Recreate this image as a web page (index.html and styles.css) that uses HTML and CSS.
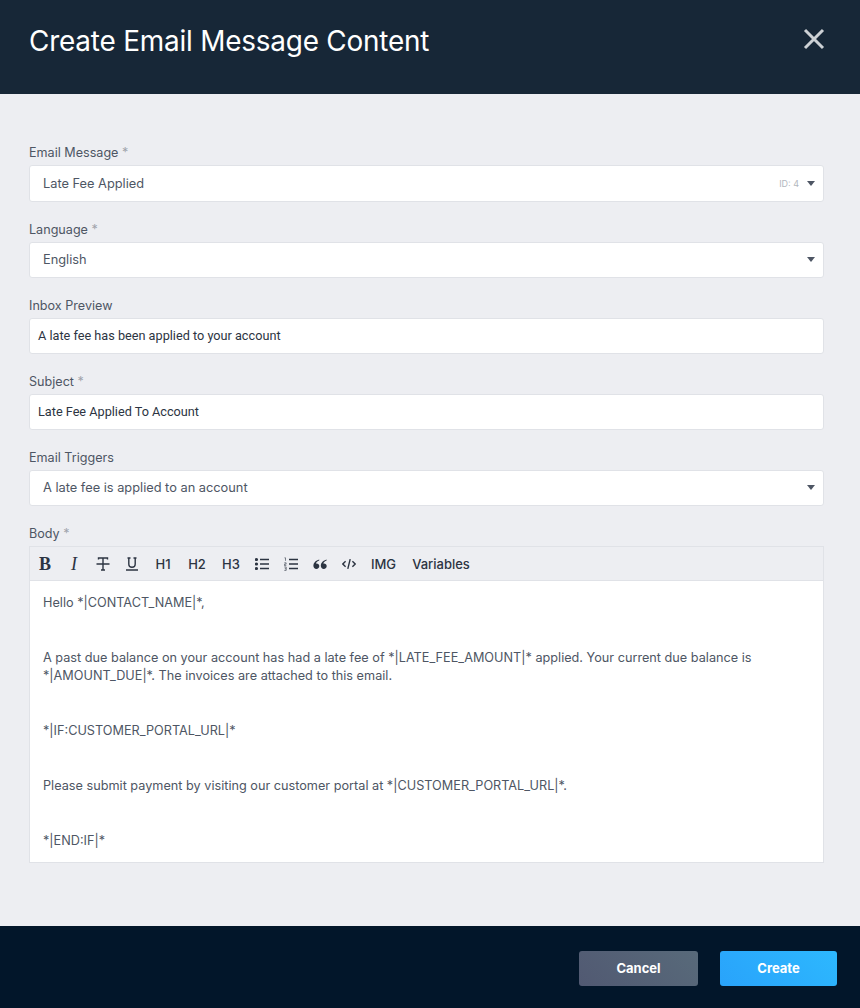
FILE: index.html
```html
<!DOCTYPE html>
<html lang="en">
<head>
  <meta charset="UTF-8">
  <title>Create Email Message Content</title>
  <link rel="stylesheet" href="styles.css">
</head>
<body>

<div class="modal">

  <!--header-->
  <div class="head">
    <h1>Create Email Message Content</h1>
    <svg class="close" width="24" height="24" viewBox="0 0 24 24">
      <path d="M3 3 L21 21 M21 3 L3 21"/>
    </svg>
  </div>

  <!--form-->
  <div class="content">
    <div class="field first">
      <label>Email Message <i>*</i></label>
      <div class="select">
        <span>Late Fee Applied</span>
        <em>ID: 4</em>
        <b class="caret"></b>
      </div>
    </div>

    <div class="field">
      <label>Language <i>*</i></label>
      <div class="select">
        <span>English</span>
        <b class="caret"></b>
      </div>
    </div>

    <div class="field">
      <label>Inbox Preview</label>
      <div class="input">A late fee has been applied to your account</div>
    </div>

    <div class="field">
      <label>Subject <i>*</i></label>
      <div class="input">Late Fee Applied To Account</div>
    </div>

    <div class="field">
      <label>Email Triggers</label>
      <div class="select">
        <span>A late fee is applied to an account</span>
        <b class="caret"></b>
      </div>
    </div>

    <div class="field body-field">
      <label>Body <i>*</i></label>
      <div class="editor">
        <div class="toolbar">
          <span class="tool serif bold">B</span>
          <span class="tool serif italic">I</span>
          <span class="tool">
            <svg width="14" height="14" viewBox="0 0 14 14"><path d="M2.5 2.5V1h9v1.5 M7 1v12 M5 13h4 M0.5 7h13"/></svg>
          </span>
          <span class="tool">
            <svg width="14" height="14" viewBox="0 0 14 14"><path d="M2.5 1h3 M8.5 1h3 M3.8 1v6a3.2 3.2 0 0 0 6.4 0V1 M1 13h12"/></svg>
          </span>
          <span class="tool text">H1</span>
          <span class="tool text">H2</span>
          <span class="tool text h3">H3</span>
          <span class="tool">
            <svg width="14" height="14" viewBox="0 0 14 14">
              <circle class="dot" cx="1.5" cy="2.5" r="1.6"/><circle class="dot" cx="1.5" cy="7" r="1.6"/><circle class="dot" cx="1.5" cy="11.5" r="1.6"/>
              <path d="M5 2.5h9 M5 7h9 M5 11.5h9"/>
            </svg>
          </span>
          <span class="tool">
            <svg width="14" height="14" viewBox="0 0 14 14">
              <path class="thin" d="M0.5 0.8h1v3 M0.3 5.8h1.8v1.4h-1.6v1.4h1.8 M0.3 10h1.9v3.4h-1.9 M0.8 11.7h1.3"/>
              <path d="M5 2.5h9 M5 7h9 M5 11.5h9"/>
            </svg>
          </span>
          <span class="tool">
            <svg width="14" height="14" viewBox="0 0 14 14">
              <path class="dot" d="M6.2 2.5C3 3.4 0.4 5.6 0.4 8.8c0 2 1.3 3.2 3 3.2s2.9-1.2 2.9-2.9-1.2-2.7-2.7-2.7c-.3 0-.5 0-.7.1.4-1.3 1.6-2.4 3.3-3zM13.6 2.5c-3.2.9-5.8 3.1-5.8 6.3 0 2 1.3 3.2 3 3.2s2.9-1.2 2.9-2.9-1.2-2.7-2.7-2.7c-.3 0-.5 0-.7.1.4-1.3 1.6-2.4 3.3-3z"/>
            </svg>
          </span>
          <span class="tool">
            <svg width="14" height="14" viewBox="0 0 14 14"><path d="M3.6 4.2L0.8 7l2.8 2.8 M10.4 4.2L13.2 7l-2.8 2.8 M8.2 2.2L5.8 11.8"/></svg>
          </span>
          <span class="tool text img">IMG</span>
          <span class="tool text vars">Variables</span>
        </div>
        <div class="text-area">
          <p>Hello *|CONTACT_NAME|*,</p>
          <p>A past due balance on your account has had a late fee of *|LATE_FEE_AMOUNT|* applied. Your current due balance is *|AMOUNT_DUE|*. The invoices are attached to this email.</p>
          <p>*|IF:CUSTOMER_PORTAL_URL|*</p>
          <p>Please submit payment by visiting our customer portal at *|CUSTOMER_PORTAL_URL|*.</p>
          <p>*|END:IF|*</p>
        </div>
      </div>
    </div>
  </div>

  <!--footer-->
  <div class="foot">
    <a class="btn cancel" href="#">Cancel</a>
    <a class="btn create" href="#">Create</a>
  </div>
</div>

</body>
</html>
```

FILE: styles.css
```css
* {
  margin: 0;
  padding: 0;
  box-sizing: border-box;
}

body {
  font-family: "Inter", "Noto Sans", sans-serif;
  background-color: #edeef2;
}

.modal {
  width: 860px;
  height: 1008px;
  display: flex;
  flex-direction: column;
}

/*header*/
.head {
  height: 94px;
  flex: none;
  background-color: #172737;
  padding: 0 34px 0 29px;
  display: flex;
  align-items: center;
  justify-content: space-between;
}

.head h1 {
  font-size: 27.9px;
  font-weight: 400;
  color: #fff;
  margin-top: -13px;
  letter-spacing: -0.2px;
}

.close {
  margin-top: -16px;
}

.close path {
  fill: none;
  stroke: #cdd1d5;
  stroke-width: 3;
}

/*form*/
.content {
  flex: 1;
  padding: 50px 36px 0 29px;
}

.field {
  margin-bottom: 19px;
}

.field label {
  display: block;
  height: 21px;
  line-height: 18px;
  font-size: 12.6px;
  color: #4e5664;
}

.field label i {
  font-style: normal;
  color: #a0a4ac;
}

.select,
.input {
  height: 36px;
  background-color: #fff;
  border: 1px solid #e0e2e7;
  border-radius: 3px;
  display: flex;
  align-items: center;
  font-size: 12.8px;
  color: #4e5664;
}

.field.first .select {
  height: 37px;
}

.select {
  padding: 0 8px 1px 13px;
}

.select span {
  flex: 1;
}

.select em {
  font-style: normal;
  font-size: 9px;
  color: #b3b7be;
  margin-right: 8px;
}

.caret {
  width: 0;
  height: 0;
  border-left: 4px solid transparent;
  border-right: 4px solid transparent;
  border-top: 5px solid #4e5664;
}

.input {
  padding: 0 8px 1px;
  font-family: "Roboto", sans-serif;
  font-size: 12.7px;
  color: #2c3442;
}

.body-field {
  margin-bottom: 0;
}

/*editor*/
.editor {
  border: 1px solid #e0e2e7;
  background-color: #fff;
}

.toolbar {
  height: 34px;
  background-color: #edeef2;
  border-bottom: 1px solid #e0e2e7;
  display: flex;
  align-items: center;
  padding-left: 8px;
  color: #2c3442;
}

.tool {
  width: 14px;
  margin-right: 15px;
  flex: none;
  text-align: center;
  font-size: 13px;
  font-weight: 500;
  line-height: 14px;
  display: flex;
  justify-content: center;
}

.tool.text {
  width: 18px;
  margin-right: 16px;
}

.tool.h3 {
  margin-right: 15px;
}

.tool.img {
  width: 25px;
}

.tool.vars {
  width: 58px;
  margin: 0;
}

.tool.serif {
  font-family: "Liberation Serif", serif;
  font-size: 18px;
}

.tool.bold {
  font-weight: 700;
}

.tool.italic {
  font-style: italic;
}

.tool svg path {
  fill: none;
  stroke: #2c3442;
  stroke-width: 1.4;
}

.tool svg path.thin {
  stroke-width: 0.6;
}

.tool svg .dot {
  fill: #2c3442;
  stroke: none;
}

.text-area {
  height: 281px;
  padding: 13px 13px 0;
  font-size: 12.7px;
  line-height: 18px;
  color: #4e5664;
}

.text-area p {
  margin-bottom: 37px;
}

/*footer*/
.foot {
  height: 82px;
  flex: none;
  background-color: #02162a;
  display: flex;
  align-items: center;
  justify-content: flex-end;
  padding: 2px 23px 0 0;
  gap: 22px;
}

.btn {
  height: 35px;
  border-radius: 3px;
  text-align: center;
  line-height: 35px;
  font-size: 13px;
  font-weight: 700;
  color: #fff;
  text-decoration: none;
}

.cancel {
  width: 119px;
  background: linear-gradient(45deg, #515972, #586a7a);
}

.create {
  width: 117px;
  background: linear-gradient(45deg, #29a3fb, #2db8fe);
}
```
